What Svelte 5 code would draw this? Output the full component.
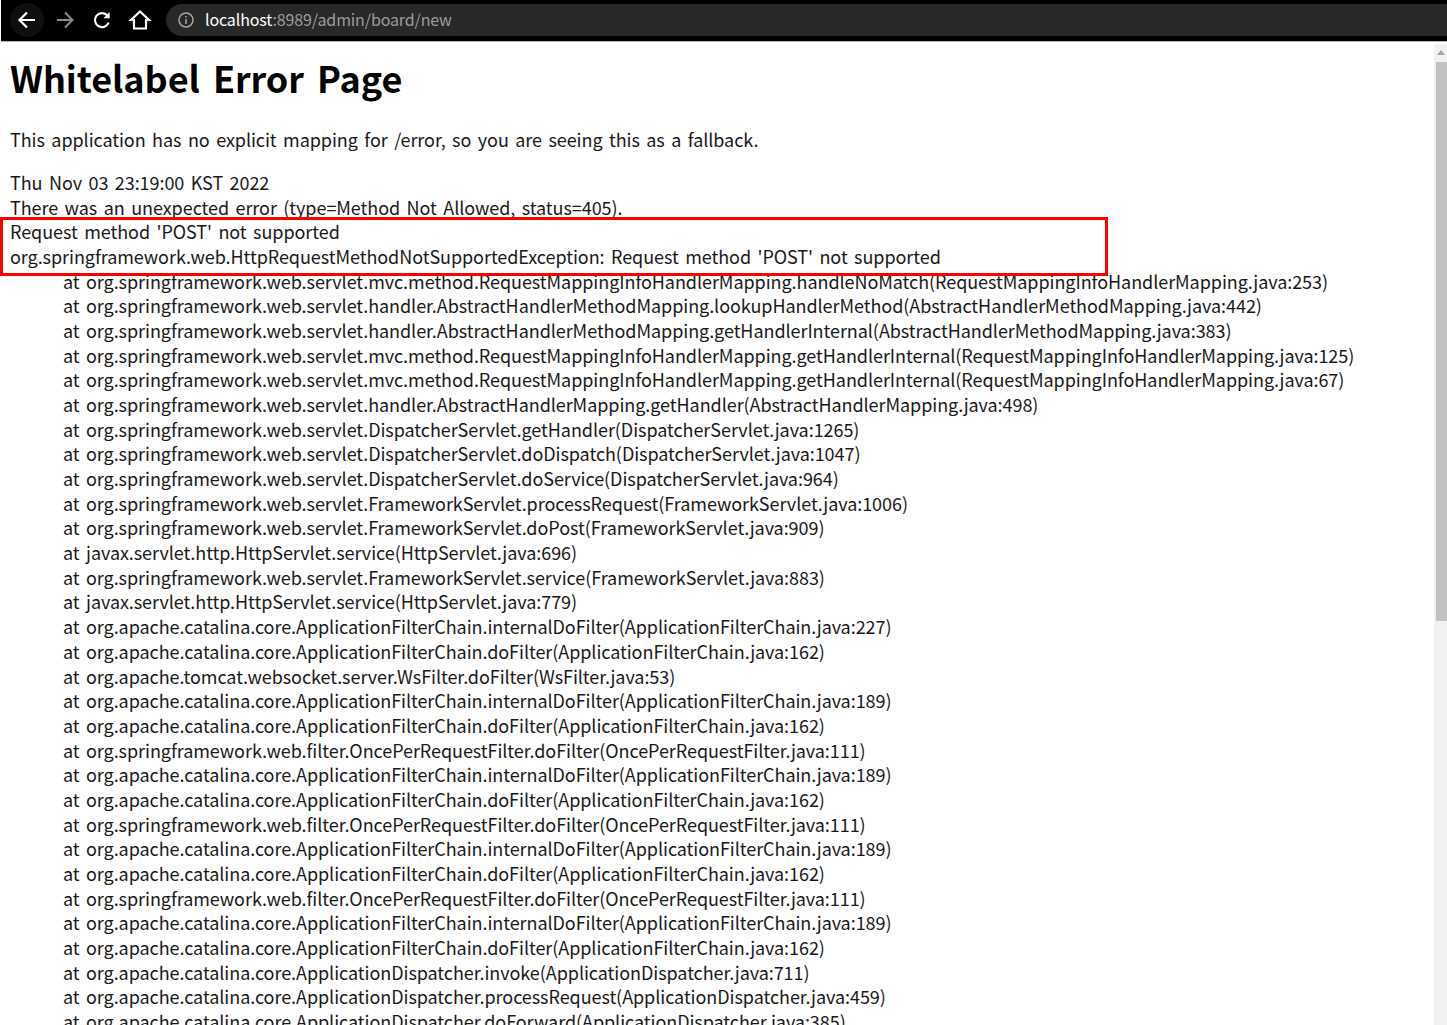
<script lang="ts">
  const trace = [
    'org.springframework.web.servlet.mvc.method.RequestMappingInfoHandlerMapping.handleNoMatch(RequestMappingInfoHandlerMapping.java:253)',
    'org.springframework.web.servlet.handler.AbstractHandlerMethodMapping.lookupHandlerMethod(AbstractHandlerMethodMapping.java:442)',
    'org.springframework.web.servlet.handler.AbstractHandlerMethodMapping.getHandlerInternal(AbstractHandlerMethodMapping.java:383)',
    'org.springframework.web.servlet.mvc.method.RequestMappingInfoHandlerMapping.getHandlerInternal(RequestMappingInfoHandlerMapping.java:125)',
    'org.springframework.web.servlet.mvc.method.RequestMappingInfoHandlerMapping.getHandlerInternal(RequestMappingInfoHandlerMapping.java:67)',
    'org.springframework.web.servlet.handler.AbstractHandlerMapping.getHandler(AbstractHandlerMapping.java:498)',
    'org.springframework.web.servlet.DispatcherServlet.getHandler(DispatcherServlet.java:1265)',
    'org.springframework.web.servlet.DispatcherServlet.doDispatch(DispatcherServlet.java:1047)',
    'org.springframework.web.servlet.DispatcherServlet.doService(DispatcherServlet.java:964)',
    'org.springframework.web.servlet.FrameworkServlet.processRequest(FrameworkServlet.java:1006)',
    'org.springframework.web.servlet.FrameworkServlet.doPost(FrameworkServlet.java:909)',
    'javax.servlet.http.HttpServlet.service(HttpServlet.java:696)',
    'org.springframework.web.servlet.FrameworkServlet.service(FrameworkServlet.java:883)',
    'javax.servlet.http.HttpServlet.service(HttpServlet.java:779)',
    'org.apache.catalina.core.ApplicationFilterChain.internalDoFilter(ApplicationFilterChain.java:227)',
    'org.apache.catalina.core.ApplicationFilterChain.doFilter(ApplicationFilterChain.java:162)',
    'org.apache.tomcat.websocket.server.WsFilter.doFilter(WsFilter.java:53)',
    'org.apache.catalina.core.ApplicationFilterChain.internalDoFilter(ApplicationFilterChain.java:189)',
    'org.apache.catalina.core.ApplicationFilterChain.doFilter(ApplicationFilterChain.java:162)',
    'org.springframework.web.filter.OncePerRequestFilter.doFilter(OncePerRequestFilter.java:111)',
    'org.apache.catalina.core.ApplicationFilterChain.internalDoFilter(ApplicationFilterChain.java:189)',
    'org.apache.catalina.core.ApplicationFilterChain.doFilter(ApplicationFilterChain.java:162)',
    'org.springframework.web.filter.OncePerRequestFilter.doFilter(OncePerRequestFilter.java:111)',
    'org.apache.catalina.core.ApplicationFilterChain.internalDoFilter(ApplicationFilterChain.java:189)',
    'org.apache.catalina.core.ApplicationFilterChain.doFilter(ApplicationFilterChain.java:162)',
    'org.springframework.web.filter.OncePerRequestFilter.doFilter(OncePerRequestFilter.java:111)',
    'org.apache.catalina.core.ApplicationFilterChain.internalDoFilter(ApplicationFilterChain.java:189)',
    'org.apache.catalina.core.ApplicationFilterChain.doFilter(ApplicationFilterChain.java:162)',
    'org.apache.catalina.core.ApplicationDispatcher.invoke(ApplicationDispatcher.java:711)',
    'org.apache.catalina.core.ApplicationDispatcher.processRequest(ApplicationDispatcher.java:459)',
    'org.apache.catalina.core.ApplicationDispatcher.doForward(ApplicationDispatcher.java:385)'
  ];
</script>

<div class="window">
  <header class="toolbar">
    <div class="nav">
      <span class="back">
        <svg width="24" height="24" viewBox="0 0 24 24" fill="none" stroke="#fff" stroke-width="2.2"><path d="M20 12H5M12 4.5 4.5 12l7.5 7.5" /></svg>
      </span>
      <svg width="24" height="24" viewBox="0 0 24 24" fill="none" stroke="#8a8a8a" stroke-width="2"><path d="M4 12h15M12 4.5l7.5 7.5-7.5 7.5" /></svg>
      <svg width="24" height="24" viewBox="0 0 24 24" fill="none" stroke="#fff" stroke-width="2.2"><path d="M18.6 14.5A7 7 0 1 1 17 7.2L19 9.4" /><path d="M19.6 4v6.2h-6.2" fill="#fff" stroke="none" /></svg>
      <svg width="24" height="24" viewBox="0 0 24 24" fill="none" stroke="#fff" stroke-width="2.2"><path d="M12 3.5 3 12h3v8.5h12V12h3z" stroke-linejoin="miter" /></svg>
    </div>
    <div class="omnibox">
      <svg width="18" height="18" viewBox="0 0 18 18" fill="none" stroke="#a8a8a8" stroke-width="1.5"><circle cx="9" cy="9" r="7" /><path d="M9 8v5M9 5v1.6" /></svg>
      <span class="url"><b>localhost</b>:8989/admin/board/new</span>
    </div>
  </header>

  <div class="viewport">
    <main class="content">
      <h1>Whitelabel Error Page</h1>
      <p class="intro">This application has no explicit mapping for /error, so you are seeing this as a fallback.</p>
      <div class="line">Thu Nov 03 23:19:00 KST 2022</div>
      <div class="line">There was an unexpected error (type=Method Not Allowed, status=405).</div>
      <div class="line">Request method 'POST' not supported</div>
      <div class="line">org.springframework.web.HttpRequestMethodNotSupportedException: Request method 'POST' not supported</div>
      {#each trace as row}
        <div class="line frame">at {row}</div>
      {/each}
      <div class="highlight"></div>
    </main>
    <aside class="scrollbar">
      <div class="arrow"></div>
      <div class="thumb"></div>
    </aside>
  </div>
</div>

<style>
  :global(body) {
    margin: 0;
    background: #fff;
  }

  .window {
    height: 1025px;
    overflow: hidden;
    display: flex;
    flex-direction: column;
    font-family: "Noto Sans CJK KR", "Noto Sans", sans-serif;
  }

  .toolbar {
    height: 42px;
    flex: none;
    box-sizing: border-box;
    margin-left: 1px;
    background: #000;
    border-bottom: 1px solid #b5b5b5;
    display: flex;
    align-items: flex-start;
    padding-top: 4px;
  }

  .nav {
    width: 165px;
    height: 32px;
    flex: none;
    display: flex;
    align-items: center;
    gap: 13.5px;
    padding-left: 14px;
    box-sizing: border-box;
  }

  .back {
    width: 24px;
    height: 24px;
    border-radius: 50%;
    background: #0f0f0f;
    box-shadow: 0 0 0 5px #0f0f0f;
  }

  .omnibox {
    flex: 1;
    height: 32px;
    border-radius: 16px 0 0 16px;
    background: #282828;
    display: flex;
    align-items: center;
    gap: 10px;
    padding-left: 11px;
    color: #9c9c9c;
    font-size: 16px;
    letter-spacing: -0.13px;
  }

  .url {
    margin-top: -2px;
  }

  .url b {
    font-weight: 400;
    color: #fff;
  }

  .viewport {
    flex: 1;
    display: flex;
    min-height: 0;
  }

  .content {
    position: relative;
    flex: 1;
    padding: 0 0 0 10px;
    color: #1a1a1a;
    font-size: 18px;
    line-height: 24.67px;
    letter-spacing: -0.06px;
    word-spacing: 2.5px;
    white-space: nowrap;
    overflow: hidden;
  }

  h1 {
    margin: 12px 0 0;
    font-size: 36px;
    line-height: 46px;
    font-weight: 700;
    color: #000;
    word-spacing: 5px;
  }

  .intro {
    margin: 27px 0 18.4px;
  }

  .frame {
    padding-left: 53px;
  }

  .highlight {
    position: absolute;
    left: 0;
    top: 175px;
    width: 1108px;
    height: 59px;
    box-sizing: border-box;
    border: 3px solid #f00;
  }

  .scrollbar {
    width: 13px;
    flex: none;
    margin-top: 2px;
    background: #f1f1f1;
  }

  .arrow {
    width: 0;
    height: 0;
    margin: 6px 0 7px 3px;
    border-left: 4px solid transparent;
    border-right: 4px solid transparent;
    border-bottom: 5px solid #a3a3a3;
  }

  .thumb {
    width: 11px;
    margin-left: 2px;
    height: 559px;
    background: #c1c1c1;
  }
</style>
